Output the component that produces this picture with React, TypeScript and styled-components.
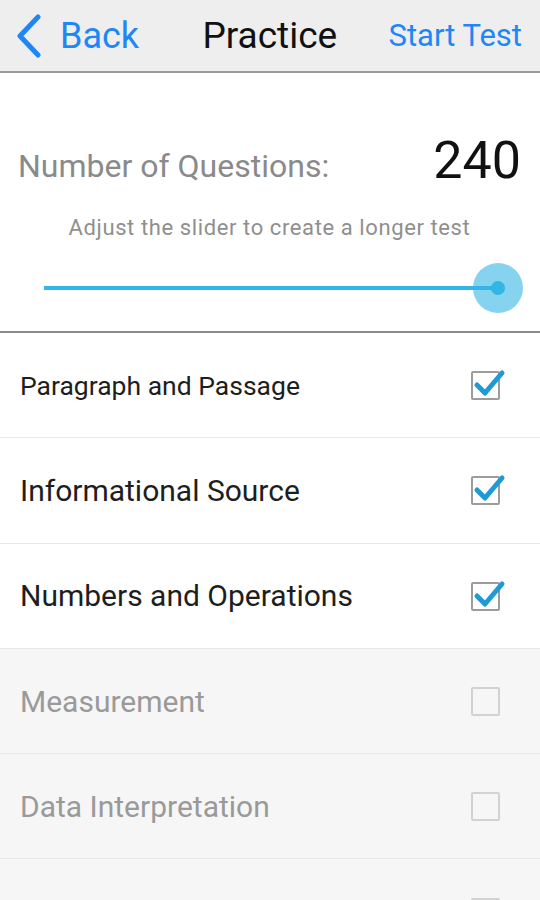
import * as React from 'react';
import styled, { createGlobalStyle } from 'styled-components';

type Topic = {
  label: string,
  checked: boolean,
  size: number,
};

const GlobalStyle = createGlobalStyle`
  html, body {
    margin: 0;
    padding: 0;
    background: #ffffff;
    font-family: Roboto, "Noto Sans", sans-serif;
  }
`;

const Page = styled.div`
  width: 540px;
  height: 900px;
  overflow: hidden;
  background: #f5f5f5;
`;

const Header = styled.div`
  height: 71px;
  background: #eeeeee;
  border-bottom: 2px solid #9a9a9a;
  display: flex;
  align-items: center;
  padding: 0 18px 0 16px;
`;

const BackButton = styled.div`
  display: flex;
  align-items: center;
  gap: 18px;
  color: #1f87f5;
  font-size: 36px;
`;

const Title = styled.div`
  flex: 1;
  text-align: center;
  font-size: 37px;
  color: #111111;
  padding-left: 12px;
`;

const HeaderAction = styled.div`
  color: #1f87f5;
  font-size: 31px;
`;

const Settings = styled.div`
  height: 258px;
  background: #ffffff;
  border-bottom: 2px solid #8a8a8a;
  display: flex;
  flex-direction: column;
  padding: 0 19px 0 18px;
`;

const CountRow = styled.div`
  display: flex;
  justify-content: space-between;
  align-items: center;
  margin-top: 56px;
  height: 62px;
`;

const CountLabel = styled.div`
  font-size: 32px;
  color: #8a8a8a;
  padding-top: 12px;
`;

const CountValue = styled.div`
  font-size: 52px;
  color: #111111;
`;

const Hint = styled.div`
  text-align: center;
  font-size: 22px;
  letter-spacing: 0.6px;
  color: #8f8f8f;
  margin-top: 24px;
`;

const SliderArea = styled.div`
  position: relative;
  height: 52px;
  margin: 23px 0 0 26px;
`;

const Track = styled.div`
  position: absolute;
  left: 0;
  right: 24px;
  top: 23px;
  height: 4px;
  background: #33b5e5;
`;

const Thumb = styled.div`
  position: absolute;
  right: -2px;
  top: 0;
  width: 50px;
  height: 50px;
  border-radius: 50%;
  background: rgba(51, 181, 229, 0.6);
  display: flex;
  align-items: center;
  justify-content: center;
  &::after {
    content: '';
    width: 14px;
    height: 14px;
    border-radius: 50%;
    background: #33b5e5;
  }
`;

const Row = styled.div<{ $enabled: boolean }>`
  height: 104.3px;
  display: flex;
  align-items: center;
  justify-content: space-between;
  padding: 0 34px 0 20px;
  background: ${({ $enabled }) => ($enabled ? '#ffffff' : '#f6f6f6')};
  border-bottom: 1px solid #e8e8e8;
`;

const RowLabel = styled.div<{ $enabled: boolean, $size: number }>`
  font-size: ${({ $size }) => $size}px;
  color: ${({ $enabled }) => ($enabled ? '#1e1e1e' : '#9a9a9a')};
`;

const topics: Array<Topic> = [
  { label: 'Paragraph and Passage', checked: true, size: 26.5 },
  { label: 'Informational Source', checked: true, size: 30 },
  { label: 'Numbers and Operations', checked: true, size: 30 },
  { label: 'Measurement', checked: false, size: 30 },
  { label: 'Data Interpretation', checked: false, size: 30 },
  { label: 'Algebraic Thinking', checked: false, size: 30 },
];

const ChevronLeft = () => (
  <svg width="26" height="44" viewBox="0 0 26 44">
    <path d="M22 3 L4 22 L22 41" fill="none" stroke="#1f87f5" strokeWidth="5" strokeLinecap="round" strokeLinejoin="round" />
  </svg>
);

const CheckBox = ({ checked }: { checked: boolean }) => (
  <svg width="36" height="34" viewBox="0 0 36 34" style={{ overflow: 'visible' }}>
    <rect x="2" y="4" width="27" height="27" fill="none" stroke={checked ? '#9c9c9c' : '#d2d2d2'} strokeWidth="2" rx="1" />
    {checked && (
      <path d="M7 17 L15 25 L32 5" fill="none" stroke="#1f9ad6" strokeWidth="5" strokeLinecap="round" strokeLinejoin="round" />
    )}
  </svg>
);

const App: React.FC = () => (
  <Page>
    <GlobalStyle />
    <Header>
      <BackButton>
        <ChevronLeft />
        Back
      </BackButton>
      <Title>Practice</Title>
      <HeaderAction>Start Test</HeaderAction>
    </Header>
    <Settings>
      <CountRow>
        <CountLabel>Number of Questions:</CountLabel>
        <CountValue>240</CountValue>
      </CountRow>
      <Hint>Adjust the slider to create a longer test</Hint>
      <SliderArea>
        <Track />
        <Thumb />
      </SliderArea>
    </Settings>
    {topics.map((topic: Topic) => (
      <Row key={topic.label} $enabled={topic.checked}>
        <RowLabel $enabled={topic.checked} $size={topic.size}>{topic.label}</RowLabel>
        <CheckBox checked={topic.checked} />
      </Row>
    ))}
  </Page>
);

export default App;
